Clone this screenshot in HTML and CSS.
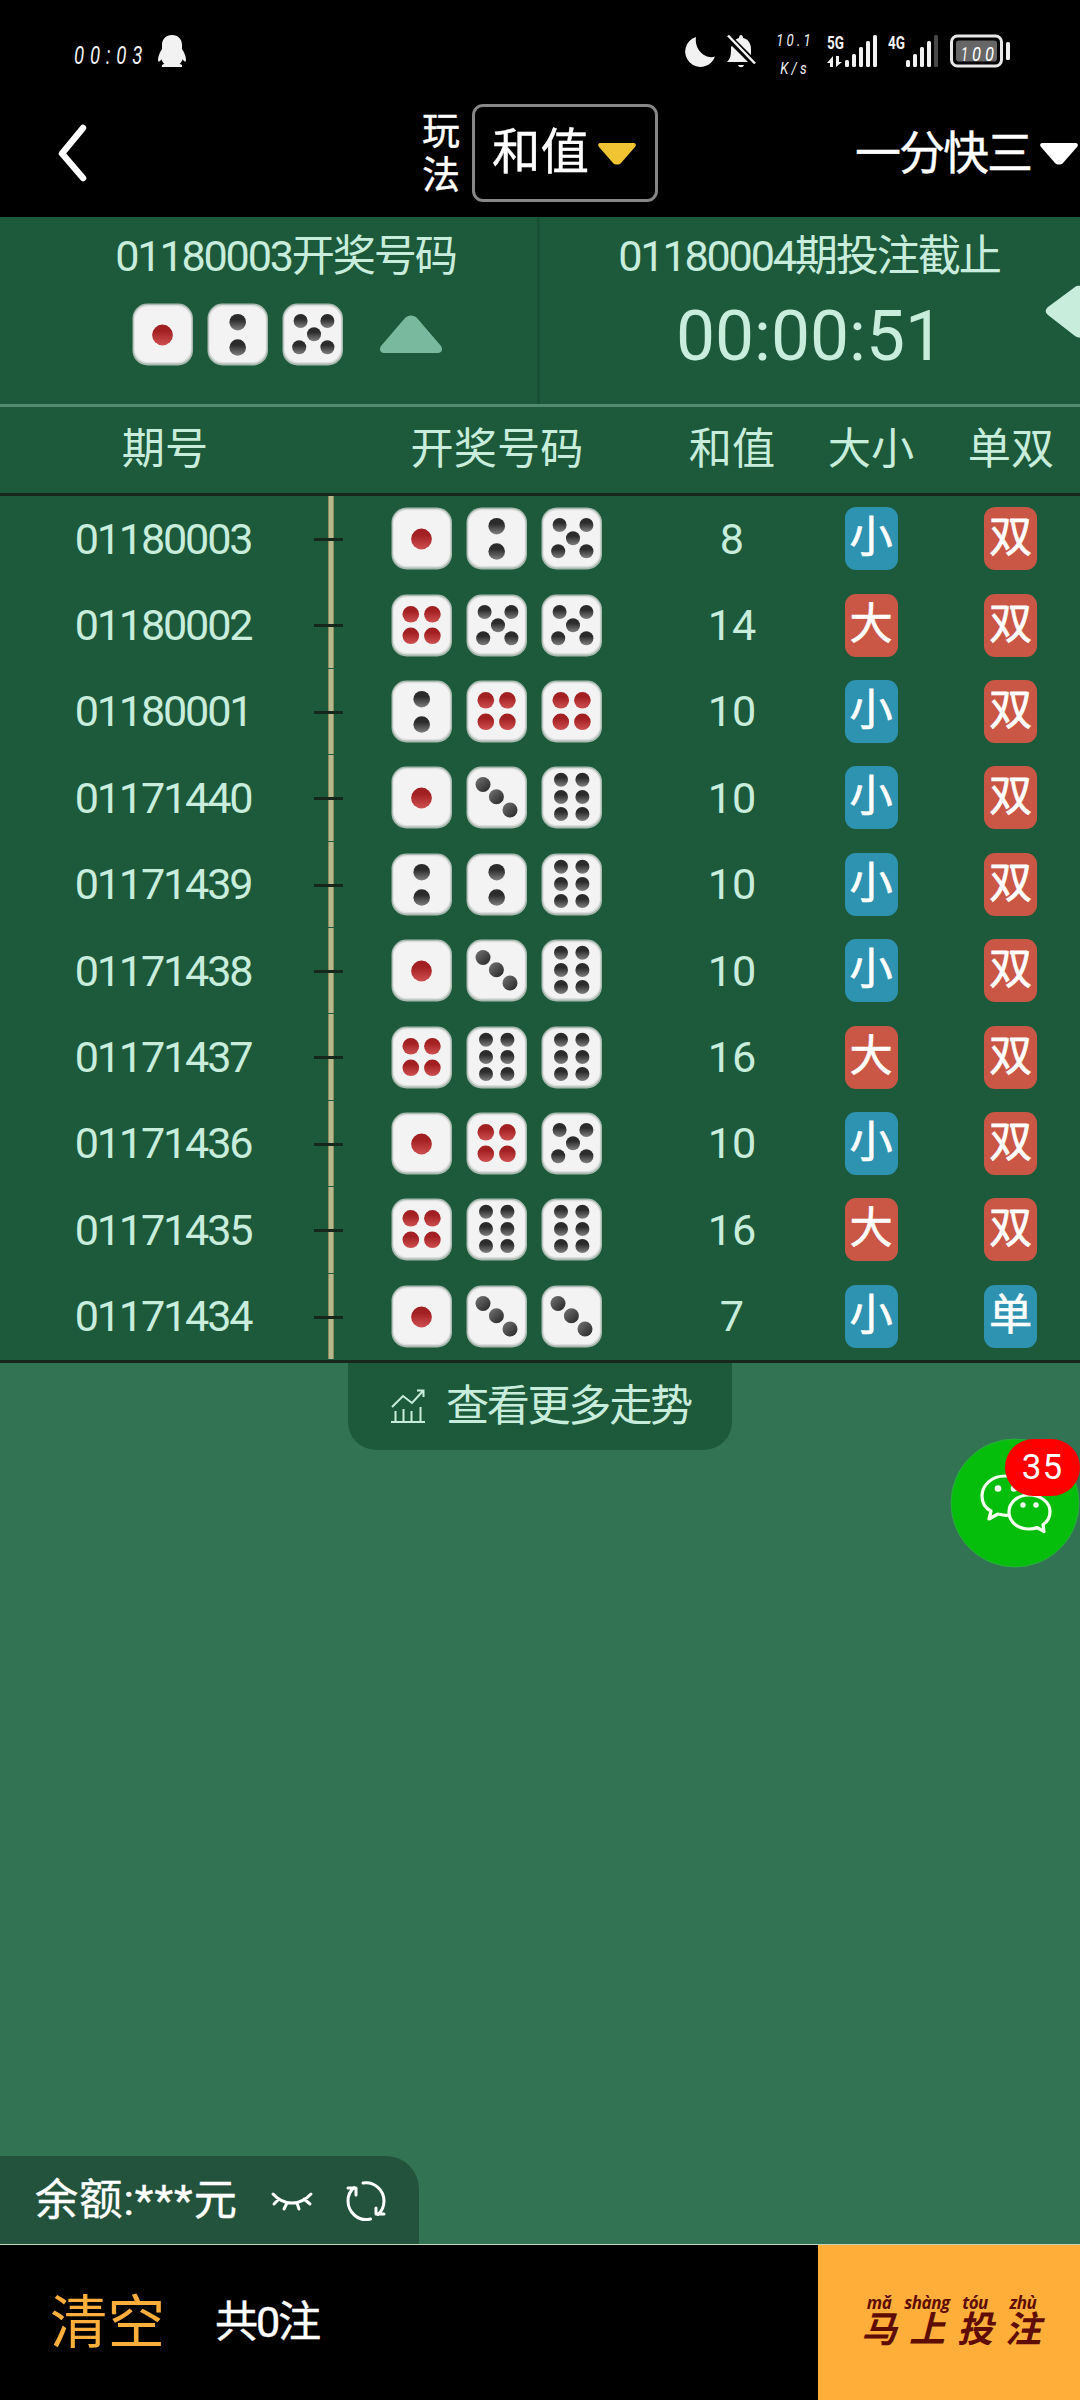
FILE: index.html
```
<!DOCTYPE html>
<html lang="zh-CN">
<head>
<meta charset="utf-8">
<title>一分快三</title>
<link rel="stylesheet" href="styles.css">
</head>
<body>
<svg class="defs" width="0" height="0">
  <defs>
    <linearGradient id="red" x1="0" y1="0" x2="0" y2="1"><stop offset=".3" stop-color="#a32022"/><stop offset="1" stop-color="#cf4f50"/></linearGradient>
    <linearGradient id="blk" x1="0" y1="0" x2="0" y2="1"><stop offset=".35" stop-color="#2b2b2b"/><stop offset="1" stop-color="#808080"/></linearGradient>
    <linearGradient id="diag" x1="1" y1="1" x2="0" y2="0"><stop offset=".1" stop-color="#2b2b2b"/><stop offset=".9" stop-color="#6e6e6e"/></linearGradient>
    <symbol id="face" viewBox="0 0 62 63"><rect x=".5" y=".5" width="60.5" height="62" rx="15" fill="#a9b9b0"/><rect x="1.7" y="2" width="58" height="58.5" rx="14" fill="#dcdfdd"/><rect x="2.6" y="3.2" width="56.2" height="55.8" rx="13.5" fill="#f3f3f3"/></symbol>
    <symbol id="d1" viewBox="0 0 62 63"><use href="#face"/><circle cx="30.5" cy="32" r="10.4" fill="url(#red)"/></symbol>
    <symbol id="d2" viewBox="0 0 62 63"><use href="#face"/><g fill="url(#blk)"><circle cx="30.7" cy="19.2" r="8.3"/><circle cx="30.7" cy="44.5" r="8.3"/></g></symbol>
    <symbol id="d3" viewBox="0 0 62 63"><use href="#face"/><g fill="url(#diag)"><circle cx="17" cy="18.5" r="7.5"/><circle cx="30.4" cy="30.8" r="7.5"/><circle cx="44" cy="44" r="7.5"/></g></symbol>
    <symbol id="d4" viewBox="0 0 62 63"><use href="#face"/><g fill="url(#red)"><circle cx="19.8" cy="20.3" r="8.3"/><circle cx="41.4" cy="20.3" r="8.3"/><circle cx="19.8" cy="41.8" r="8.3"/><circle cx="41.4" cy="41.8" r="8.3"/></g></symbol>
    <symbol id="d5" viewBox="0 0 62 63"><use href="#face"/><g fill="url(#blk)"><circle cx="18.6" cy="18" r="7"/><circle cx="45.4" cy="18" r="7"/><circle cx="32" cy="31.2" r="7"/><circle cx="17.2" cy="44.3" r="7"/><circle cx="45.4" cy="44.3" r="7"/></g></symbol>
    <symbol id="d6" viewBox="0 0 62 63"><use href="#face"/><g fill="url(#blk)"><circle cx="20" cy="13.8" r="7"/><circle cx="41.4" cy="13.8" r="7"/><circle cx="20" cy="31" r="7"/><circle cx="41.4" cy="31" r="7"/><circle cx="20" cy="48" r="7"/><circle cx="41.4" cy="48" r="7"/></g></symbol>
  </defs>
</svg>

<div class="status">
  <span class="clock">00:03</span>
  <svg class="qq" width="30" height="34" viewBox="0 0 30 34"><path d="M15 1C8.500 1 5 5.500 5 11v4C3 18 1 22 1 26c0 2.500 1.500 2 3.500-.8.5 2 1.500 3.400 2.800 4.600C5 30.600 4.500 31.500 5 33h20c.5-1.500 0-2.400-2.300-3.200 1.300-1.200 2.300-2.600 2.800-4.600C27.500 28 29 28.500 29 26c0-4-2-8-4-11v-4C25 5.500 21.500 1 15 1z" fill="#f2f2f2"/></svg>
  <svg class="moon" width="30" height="32" viewBox="0 0 30 32"><path d="M11 1A15.300 15.300 0 1 0 30 20.500C21 24 9 14 11 1z" fill="#f2f2f2"/></svg>
  <svg class="bell" width="30" height="34" viewBox="0 0 30 34"><path d="M4 28c2-2 2-4 2-13 0-6 3-10 7-11 0-4 4-4 4 0 5 1 8 5 8 11 0 9 0 11 3 13zM12 31h6c-1 3-5 3-6 0z" fill="#f2f2f2"/><path d="M1 2l28 28" stroke="#000" stroke-width="7"/><path d="M2 1.500l27 28" stroke="#f2f2f2" stroke-width="2.500"/><path d="M1 28h20L5 12c0 9 0 12-4 16z" fill="#f2f2f2"/></svg>
  <div class="speed"><span>10.1</span><span>K/s</span></div>
  <svg class="signals" width="112" height="34" viewBox="0 0 112 34"><g fill="#f2f2f2"><rect x="18" y="26" width="4" height="7" rx="1.500"/><rect x="25" y="20" width="4" height="13" rx="1.500"/><rect x="32" y="13" width="4" height="20" rx="1.500"/><rect x="39" y="7" width="4" height="26" rx="1.500"/><rect x="46" y="1" width="4" height="32" rx="1.500"/><rect x="79" y="26" width="4" height="7" rx="1.500"/><rect x="86" y="20" width="4" height="13" rx="1.500"/><rect x="93" y="13" width="4" height="20" rx="1.500"/><rect x="100" y="7" width="4" height="26" rx="1.500"/><path d="M0 29l6-7v11H3v-4zM9 22v11l6-5h-3v-6z"/></g><rect x="107" y="1" width="4" height="32" rx="1.500" fill="#484848"/><g class="net" fill="#f2f2f2"><text x="0" y="15" textLength="17" lengthAdjust="spacingAndGlyphs">5G</text><text x="61" y="15" textLength="17" lengthAdjust="spacingAndGlyphs">4G</text></g></svg>
  <svg class="battery" width="62" height="34" viewBox="0 0 62 34"><rect x="1.500" y="2" width="50" height="30" rx="6" fill="none" stroke="#e8e8e8" stroke-width="3"/><rect x="6" y="6.500" width="41" height="21" rx="3" fill="#666"/><rect x="56" y="8" width="4" height="18" rx="1.500" fill="#eee"/><g class="pct"><text x="11" y="27" textLength="7" lengthAdjust="spacingAndGlyphs">1</text><text x="22" y="27" textLength="9" lengthAdjust="spacingAndGlyphs">0</text><text x="35" y="27" textLength="9" lengthAdjust="spacingAndGlyphs">0</text></g></svg>
</div>

<header class="nav">
  <svg class="back" width="30" height="58" viewBox="0 0 30 58"><path d="M25 4L4 29.500 25 54" fill="none" stroke="#fff" stroke-width="6.500" stroke-linecap="round" stroke-linejoin="round"/></svg>
  <span class="play">玩<br>法</span>
  <div class="mode"><span>和值</span><svg width="38" height="24" viewBox="0 0 38 24"><path d="M3 1h32c3 0 3.500 2 2 4L23 21c-2 2-6 2-8 0L1 5C-.5 3 0 1 3 1z" fill="#f0c432"/></svg></div>
  <div class="game"><span>一分快三</span><svg width="38" height="24" viewBox="0 0 38 24"><path d="M3 1h32c3 0 3.500 2 2 4L23 21c-2 2-6 2-8 0L1 5C-.5 3 0 1 3 1z" fill="#fff"/></svg></div>
</header>

<section class="draw">
  <div class="last">
    <div class="title">01180003开奖号码</div>
    <div class="result"><svg class="die"><use href="#d1"/></svg><svg class="die"><use href="#d2"/></svg><svg class="die"><use href="#d5"/></svg>
      <svg class="up" width="64" height="38" viewBox="0 0 64 38"><path d="M26 3c3-3.500 9-3.500 12 0l24 28c2 3 1 7-3 7H5c-4 0-5-4-3-7z" fill="#79b99e"/></svg></div>
  </div>
  <div class="next">
    <div class="title">01180004期投注截止</div>
    <div class="timer">00:00:51</div>
    <svg class="side" width="36" height="52" viewBox="0 0 36 52"><path d="M2 22L29 2c3-2 7-1 7 0v50c0 1-4 1-7-1L2 30c-3-3-3-5 0-8z" fill="#c9eddc"/></svg>
  </div>
</section>

<section class="table">
  <div class="row head"><span>期号</span><span>开奖号码</span><span>和值</span><span>大小</span><span>单双</span></div>
  <div class="row"><span class="no">01180003</span><span class="dice"><svg class="die"><use href="#d1"/></svg><svg class="die"><use href="#d2"/></svg><svg class="die"><use href="#d5"/></svg></span><span>8</span><span><b class="blue">小</b></span><span><b class="red">双</b></span></div>
  <div class="row"><span class="no">01180002</span><span class="dice"><svg class="die"><use href="#d4"/></svg><svg class="die"><use href="#d5"/></svg><svg class="die"><use href="#d5"/></svg></span><span>14</span><span><b class="red">大</b></span><span><b class="red">双</b></span></div>
  <div class="row"><span class="no">01180001</span><span class="dice"><svg class="die"><use href="#d2"/></svg><svg class="die"><use href="#d4"/></svg><svg class="die"><use href="#d4"/></svg></span><span>10</span><span><b class="blue">小</b></span><span><b class="red">双</b></span></div>
  <div class="row"><span class="no">01171440</span><span class="dice"><svg class="die"><use href="#d1"/></svg><svg class="die"><use href="#d3"/></svg><svg class="die"><use href="#d6"/></svg></span><span>10</span><span><b class="blue">小</b></span><span><b class="red">双</b></span></div>
  <div class="row"><span class="no">01171439</span><span class="dice"><svg class="die"><use href="#d2"/></svg><svg class="die"><use href="#d2"/></svg><svg class="die"><use href="#d6"/></svg></span><span>10</span><span><b class="blue">小</b></span><span><b class="red">双</b></span></div>
  <div class="row"><span class="no">01171438</span><span class="dice"><svg class="die"><use href="#d1"/></svg><svg class="die"><use href="#d3"/></svg><svg class="die"><use href="#d6"/></svg></span><span>10</span><span><b class="blue">小</b></span><span><b class="red">双</b></span></div>
  <div class="row"><span class="no">01171437</span><span class="dice"><svg class="die"><use href="#d4"/></svg><svg class="die"><use href="#d6"/></svg><svg class="die"><use href="#d6"/></svg></span><span>16</span><span><b class="red">大</b></span><span><b class="red">双</b></span></div>
  <div class="row"><span class="no">01171436</span><span class="dice"><svg class="die"><use href="#d1"/></svg><svg class="die"><use href="#d4"/></svg><svg class="die"><use href="#d5"/></svg></span><span>10</span><span><b class="blue">小</b></span><span><b class="red">双</b></span></div>
  <div class="row"><span class="no">01171435</span><span class="dice"><svg class="die"><use href="#d4"/></svg><svg class="die"><use href="#d6"/></svg><svg class="die"><use href="#d6"/></svg></span><span>16</span><span><b class="red">大</b></span><span><b class="red">双</b></span></div>
  <div class="row"><span class="no">01171434</span><span class="dice"><svg class="die"><use href="#d1"/></svg><svg class="die"><use href="#d3"/></svg><svg class="die"><use href="#d3"/></svg></span><span>7</span><span><b class="blue">小</b></span><span><b class="blue">单</b></span></div>
</section>

<main class="board">
  <div class="more"><svg width="34" height="34" viewBox="0 0 34 34" fill="none" stroke="#c9eddc" stroke-width="2"><path d="M1 18L12 7l9 7L32 2M26 1.500h6.500V8M4.500 32V22M12.500 32V20M20.500 32V22M29.500 32V18M0 33h34"/></svg><span>查看更多走势</span></div>
  <div class="balance"><span>余额:***元</span>
    <svg class="eye" width="42" height="20" viewBox="0 0 42 20" fill="none" stroke="#fff" stroke-width="3" stroke-linecap="round"><path d="M2 2c11 12 27 12 38 0M8 7l-5 5M16 11l-3 6M26 11l2 6M33 7l6 5"/></svg>
    <svg class="reload" width="40" height="40" viewBox="0 0 40 40" fill="none" stroke="#fff" stroke-width="3" stroke-linecap="round" stroke-linejoin="round"><path d="M24.500 38C12 41 2 31 2 20c0-5 2-10 6-13.500M2 7h8v7M17 2c11-2 21 7 21 18 0 5-2 10-6 13.500M38 33h-8v-6"/></svg></div>
</main>

<footer class="bar">
  <span class="clear">清空</span><span class="count">共0注</span>
  <div class="submit"><span><i>mǎ</i>马</span><span><i>shàng</i>上</span><span><i>tóu</i>投</span><span><i>zhù</i>注</span></div>
</footer>

<div class="chat">
  <svg width="130" height="130" viewBox="0 0 130 130"><circle cx="65" cy="65" r="64" fill="#05be0b" stroke="#2cac42"/><g fill="none" stroke="#f4fff0" stroke-width="3.200" stroke-linejoin="round"><path d="M79 57c-1-12-12-19-24-19-13 0-23 9-23 20 0 7 3 12 9 15l-2 8 9-5c4 1 7 2 11 1"/><path d="M79 57c-11 0-20 7-20 17s9 17 20 17c3 0 6-.5 8-1.500l7 4-1-7c5-3 7-8 7-13 0-9-9-16.500-21-16.500z"/></g><g fill="#f4fff0"><circle cx="48" cy="50.500" r="3.300"/><circle cx="64" cy="50.500" r="3.300"/><circle cx="73" cy="67" r="2.700"/><circle cx="86" cy="67" r="2.700"/></g></svg>
  <span class="badge">35</span>
</div>
</body>
</html>
```
FILE: styles.css
```
* { box-sizing: border-box; }
body { margin: 0; width: 1080px; height: 2400px; display: flex; flex-direction: column; background: #327353; overflow: hidden; font: 43.2px/1 Roboto, "Noto Sans CJK SC", sans-serif; position: relative; }
svg { display: block; flex: none; overflow: visible; }
.defs { position: absolute; }
span { white-space: nowrap; }

.status { height: 94px; background: #000; color: #f2f2f2; display: flex; padding: 34px 68px 0 74px; flex: none; }
.clock { width: 83px; font: italic 400 26px/42px Roboto, sans-serif; letter-spacing: 8px; transform: scaleX(.72); transform-origin: 0 50%; }
.moon { margin: 2px 11px 0 498px; }
.bell { margin-right: 12px; }
.speed { width: 54px; height: 56px; margin: -8px 5px 0 0; display: flex; flex-direction: column; align-items: center; font: italic 400 17px/28px Roboto, sans-serif; letter-spacing: 4px; transform: scaleX(.78); }
.net { font: bold 18px Roboto, sans-serif; }
.battery { margin-left: 11px; }
.pct { font: italic 400 20px Roboto, sans-serif; fill: #fff; }

.nav { height: 123px; background: #000; color: #fff; display: flex; flex: none; padding: 10px 2px 0 58px; -webkit-text-stroke: .4px #fff; }
.back { margin-top: 20px; }
.play { margin: 5px 11px 0 334px; font-size: 38px; line-height: 44px; width: 39px; }
.mode { width: 186px; height: 98px; border: 3px solid #878787; border-radius: 11px; display: flex; align-items: center; padding-left: 17px; font-size: 48.5px; gap: 9px; }
.mode svg, .game svg { margin-top: 1px; }
.game { height: 98px; margin-left: auto; display: flex; align-items: center; font-size: 46px; gap: 9px; }
.game span { letter-spacing: -2px; }

.draw { height: 190px; display: flex; flex: none; background: #1c5a3b; border-bottom: 3px solid #528b70; color: #c9eddc; }
.last { width: 540px; border-right: 3px solid #194f34; display: flex; flex-direction: column; align-items: center; padding: 17px 0 0 36px; }
.title { font-size: 43.2px; line-height: 46px; letter-spacing: -2.2px; margin-left: -2px; }
.result { display: flex; gap: 13px; margin: 23px 0 0 2px; }
.die { width: 62px; height: 63px; }
.up { margin: 12px 0 0 22px; }
.next { width: 540px; display: flex; flex-direction: column; align-items: center; padding-top: 17px; position: relative; }
.timer { font-size: 69.5px; line-height: 72px; margin-top: 21px; }
.side { position: absolute; right: -2px; top: 68px; }

.table { background: #1c5a3b; color: #c9eddc; flex: none; border-bottom: 3px solid #16271e; }
.row { display: grid; grid-template-columns: 330px 334px 136px 142px 138px; height: 86.4px; align-items: center; text-align: center; }
.row > span { display: flex; justify-content: center; align-items: center; height: 100%; }
.head { height: 89px; border-bottom: 3px solid #16271e; }
.row .no { letter-spacing: -2.2px; padding-right: 4px; position: relative; }
.no::before { content: ""; position: absolute; left: 328px; top: 0; width: 4px; height: 85.5px; background: #b3b98c; border: solid #8f8b5c; border-width: 0 1px; }
.no::after { content: ""; position: absolute; left: 314px; top: 42px; width: 29px; height: 3px; background: #16271e; }
.row .dice { gap: 13px; padding: 0 1px 1px 0; }
.row b { font-weight: 400; color: #fff; width: 53px; height: 63px; margin: 0 1px 1px 0; border-radius: 11px; line-height: 62px; -webkit-text-stroke: .6px #fff; }
.row > :nth-child(4) b { margin-right: 0; }
.blue { background: #2e93b0; }
.red { background: #ca5745; }

.board { flex: 1; display: flex; flex-direction: column; justify-content: space-between; border-bottom: 1px solid #c5d5b8; }
.more { width: 384px; height: 87px; margin-left: 348px; background: #1c5a3b; color: #c9eddc; border-radius: 0 0 28px 28px; display: flex; align-items: center; padding-left: 43px; gap: 21px; letter-spacing: -2.4px; }
.balance { width: 419px; height: 88px; background: #23533c; border-radius: 0 33px 0 0; color: #fff; display: flex; align-items: center; padding: 1px 0 0 35px; letter-spacing: 1px; -webkit-text-stroke: .4px #fff; }
.eye { margin: 3px 33px 0 auto; }
.reload { margin: 0 33px 0 0; }

.bar { height: 155px; flex: none; background: #000; color: #fff; display: flex; align-items: center; }
.clear { font-size: 57.6px; color: #feae3b; margin-left: 50px; width: 165px; padding-top: 2px; }
.count { letter-spacing: -2.2px; -webkit-text-stroke: .4px #fff; }
.submit { margin-left: auto; width: 262px; height: 155px; background: #feae39; color: #5f0c04; display: flex; padding: 50px 0 0 37px; font: italic bold 36px/30px "Noto Sans CJK SC", sans-serif; }
.submit span { width: 48px; display: flex; flex-direction: column; align-items: center; }
.submit i { font: italic bold 17px/16px "Open Sans", sans-serif; letter-spacing: -.5px; }

.chat { position: absolute; left: 950px; top: 1438px; width: 130px; }
.badge { position: absolute; right: 0; top: 1px; width: 75px; height: 57px; border-radius: 29px; background: #fe0000; color: #fff; font-size: 35px; line-height: 58px; letter-spacing: 1px; text-align: center; }
```
